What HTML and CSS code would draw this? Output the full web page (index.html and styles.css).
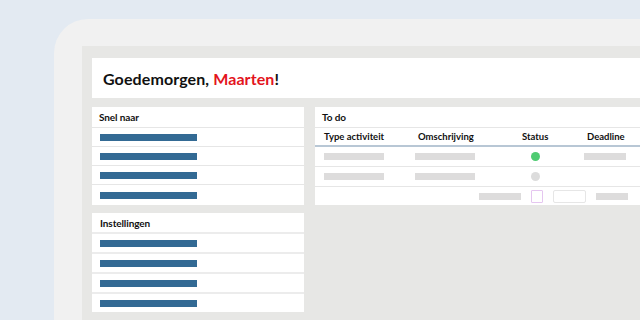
FILE: index.html
```html
<!DOCTYPE html>
<html lang="nl">
<head>
    <meta charset="UTF-8">
    <title>Dashboard</title>
    <link rel="stylesheet" href="styles.css">
</head>
<body>
    <div class="device">
        <div class="screen">
            <div class="greeting">Goedemorgen, <span class="name">Maarten</span>!</div>

            <div class="columns">
                <div class="side">
                    <div class="panel">
                        <div class="panel-title">Snel naar</div>
                        <div class="link-row"><span class="link-bar"></span></div>
                        <div class="link-row"><span class="link-bar"></span></div>
                        <div class="link-row"><span class="link-bar"></span></div>
                        <div class="link-row"><span class="link-bar"></span></div>
                    </div>

                    <div class="panel settings">
                        <div class="panel-title">Instellingen</div>
                        <div class="link-row"><span class="link-bar"></span></div>
                        <div class="link-row"><span class="link-bar"></span></div>
                        <div class="link-row"><span class="link-bar"></span></div>
                        <div class="link-row"><span class="link-bar"></span></div>
                    </div>
                </div>

                <div class="panel todo">
                    <div class="panel-title">To do</div>
                    <div class="todo-row todo-head">
                        <span>Type activiteit</span>
                        <span class="col-desc">Omschrijving</span>
                        <span>Status</span>
                        <span class="col-date">Deadline</span>
                    </div>
                    <div class="todo-row">
                        <span class="ph wide"></span>
                        <span class="ph wide"></span>
                        <span class="dot green"></span>
                        <span class="ph short"></span>
                    </div>
                    <div class="todo-row">
                        <span class="ph wide"></span>
                        <span class="ph wide"></span>
                        <span class="dot"></span>
                        <span></span>
                    </div>
                    <div class="todo-foot">
                        <span class="ph mid"></span>
                        <span class="check"></span>
                        <span class="input"></span>
                        <span class="ph short"></span>
                    </div>
                </div>
            </div>
        </div>
    </div>
</body>
</html>
```

FILE: styles.css
```css
body {
    margin: 0;
    width: 640px;
    height: 320px;
    overflow: hidden;
    background: #e3eaf2;
    font-family: Lato, "Open Sans", sans-serif;
    color: #111;
}

.device {
    margin: 19px 0 0 54px;
    height: 301px;
    padding: 27px 0 0 28px;
    box-sizing: border-box;
    background: #f1f1f1;
    border-top-left-radius: 34px;
}

.screen {
    height: 100%;
    padding: 12px 0 0 10px;
    box-sizing: border-box;
    background: #e7e7e5;
}

.greeting {
    height: 40px;
    display: flex;
    align-items: center;
    padding-left: 11px;
    background: #fff;
    font-size: 16px;
    font-weight: 700;
    letter-spacing: 0.1px;
}

.name {
    color: #e3141d;
    margin-left: 4px;
}

.columns {
    display: flex;
    gap: 11px;
    margin-top: 9px;
}

.side {
    width: 212px;
    display: flex;
    flex-direction: column;
    gap: 8px;
}

.panel {
    background: #fff;
}

.panel-title {
    height: 20px;
    display: flex;
    align-items: center;
    padding-left: 7px;
    border-bottom: 1px solid #e6e6e6;
    font-size: 10px;
    font-weight: 700;
    letter-spacing: -0.1px;
}

.link-row {
    height: 18px;
    display: flex;
    align-items: center;
    padding-left: 8px;
    border-bottom: 1px solid #e6e6e6;
}

.link-row:last-child {
    height: 20px;
    border-bottom: none;
}

.settings .panel-title {
    height: 19px;
    border-bottom: 2px solid #ececec;
    padding-left: 8px;
}

.settings .link-row {
    height: 18px;
    border-bottom: 2px solid #ececec;
}

.settings .link-row:last-child {
    border-bottom: none;
}

.link-bar {
    width: 97px;
    height: 7px;
    background: #336a94;
}

.todo {
    flex: 1;
    height: 98px;
}

.todo .panel-title {
    padding-left: 7px;
}

.todo-row {
    display: grid;
    grid-template-columns: 91px 107px 62px 1fr;
    align-items: center;
    height: 19px;
    padding-left: 9px;
    border-bottom: 1px solid #e6e6e6;
}

.todo-head {
    height: 17px;
    border-bottom: 2px solid #b8c7d5;
    font-size: 9.5px;
    font-weight: 700;
    letter-spacing: 0;
}

.col-desc,
.col-date {
    padding-left: 3px;
}

.ph {
    height: 7px;
    background: #dddcdc;
}

.wide { width: 60px; }
.mid { width: 42px; }
.short { width: 42px; }

.dot {
    width: 9px;
    height: 9px;
    margin-left: 9px;
    border-radius: 50%;
    background: #dcdcdc;
}

.dot.green {
    background: #4fcb72;
}

.todo-foot {
    display: flex;
    align-items: center;
    height: 18px;
    padding-left: 164px;
}

.todo-foot .short {
    width: 32px;
    margin-left: 10px;
}

.check {
    width: 10px;
    height: 11px;
    margin-left: 10px;
    border: 1px solid #e5c6f0;
    border-radius: 1px;
}

.input {
    width: 31px;
    height: 11px;
    margin-left: 10px;
    border: 1px solid #e6e6e6;
    border-radius: 2px;
}
```
